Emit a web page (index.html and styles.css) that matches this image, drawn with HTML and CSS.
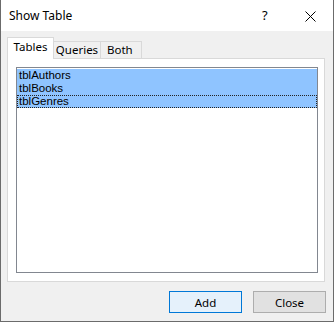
FILE: index.html
```html
<!DOCTYPE html>
<html lang="en">
<head>
    <meta charset="UTF-8">
    <title>Show Table</title>
    <link rel="stylesheet" href="styles.css">
</head>
<body>
    <div class="window">
        <div class="titlebar">
            <span class="title">Show Table</span>
            <span class="help">?</span>
            <span class="close-x">
                <svg width="11" height="11" viewBox="0 0 11 11">
                    <path d="M0.5 0.5 L10.5 10.5 M10.5 0.5 L0.5 10.5" stroke="#000" stroke-width="1" fill="none"/>
                </svg>
            </span>
        </div>
        <div class="content">
            <div class="tabs">
                <div class="tab active">Tables</div>
                <div class="tab queries">Queries</div>
                <div class="tab both">Both</div>
            </div>
            <div class="panel">
                <div class="listbox">
                    <div class="item selected">tblAuthors</div>
                    <div class="item selected">tblBooks</div>
                    <div class="item selected focused">tblGenres</div>
                </div>
            </div>
            <div class="buttons">
                <button class="btn default">Add</button>
                <button class="btn">Close</button>
            </div>
        </div>
    </div>
</body>
</html>
```
FILE: styles.css
```css
html, body {
    margin: 0;
    padding: 0;
}

body {
    width: 334px;
    height: 322px;
    font-family: "Noto Sans", "Open Sans", sans-serif;
    font-size: 11.5px;
    color: #000;
    background-color: #f0f0f0;
}

.window {
    box-sizing: border-box;
    width: 334px;
    height: 322px;
    border: 1px solid #6b6b6b;
    border-top: none;
    background-color: #f0f0f0;
    display: flex;
    flex-direction: column;
}

.titlebar {
    height: 31px;
    flex: none;
    background-color: #fff;
    display: flex;
    align-items: center;
}

.title {
    margin-left: 8px;
    margin-top: -1px;
    font-size: 12px;
}

.help {
    margin-left: auto;
    width: 7px;
    font-size: 13px;
    margin-right: 36px;
    margin-top: -1px;
}

.close-x {
    width: 11px;
    height: 11px;
    margin-right: 17px;
    margin-top: 1px;
    display: flex;
}

.content {
    flex: 1;
    padding: 6px 8px 0 6px;
    display: flex;
    flex-direction: column;
}

.tabs {
    display: flex;
    align-items: flex-end;
    height: 21px;
}

.tab {
    box-sizing: border-box;
    height: 17px;
    border-top: 1px solid #d9d9d9;
    border-right: 1px solid #d9d9d9;
    text-align: center;
    line-height: 15px;
    background-color: #f0f0f0;
}

.tab.active {
    width: 47px;
    height: 22px;
    margin-bottom: -1px;
    border-left: 1px solid #d9d9d9;
    background-color: #fff;
    line-height: 17px;
    position: relative;
    z-index: 1;
}

.tab.queries {
    width: 47px;
}

.tab.both {
    width: 41px;
    text-align: left;
    padding-left: 6px;
}

.panel {
    box-sizing: border-box;
    width: 318px;
    height: 224px;
    border: 1px solid #d9d9d9;
    background-color: #fff;
    padding: 8px 6px 0 8px;
}

.listbox {
    box-sizing: border-box;
    width: 302px;
    height: 206px;
    border: 1px solid #828790;
    padding-top: 1px;
}

.item {
    box-sizing: border-box;
    height: 13px;
    font-family: "Liberation Sans", Arial, sans-serif;
    font-size: 11.5px;
    line-height: 13px;
    padding-left: 2px;
    white-space: nowrap;
}

.item.selected {
    background-color: #8fc4ff;
}

.item.focused {
    border: 1px dotted #222;
    padding-left: 1px;
    line-height: 11px;
}

.buttons {
    display: flex;
    justify-content: flex-end;
    gap: 11px;
    margin-top: 9px;
    margin-right: -1px;
}

.btn {
    box-sizing: border-box;
    width: 73px;
    height: 22px;
    font-family: "Noto Sans", "Open Sans", sans-serif;
    font-size: 11.5px;
    color: #000;
    background-color: #e1e1e1;
    border: 1px solid #adadad;
    padding: 0;
    margin: 0;
}

.btn.default {
    background-color: #e5f1fb;
    border-color: #0078d7;
}
```
